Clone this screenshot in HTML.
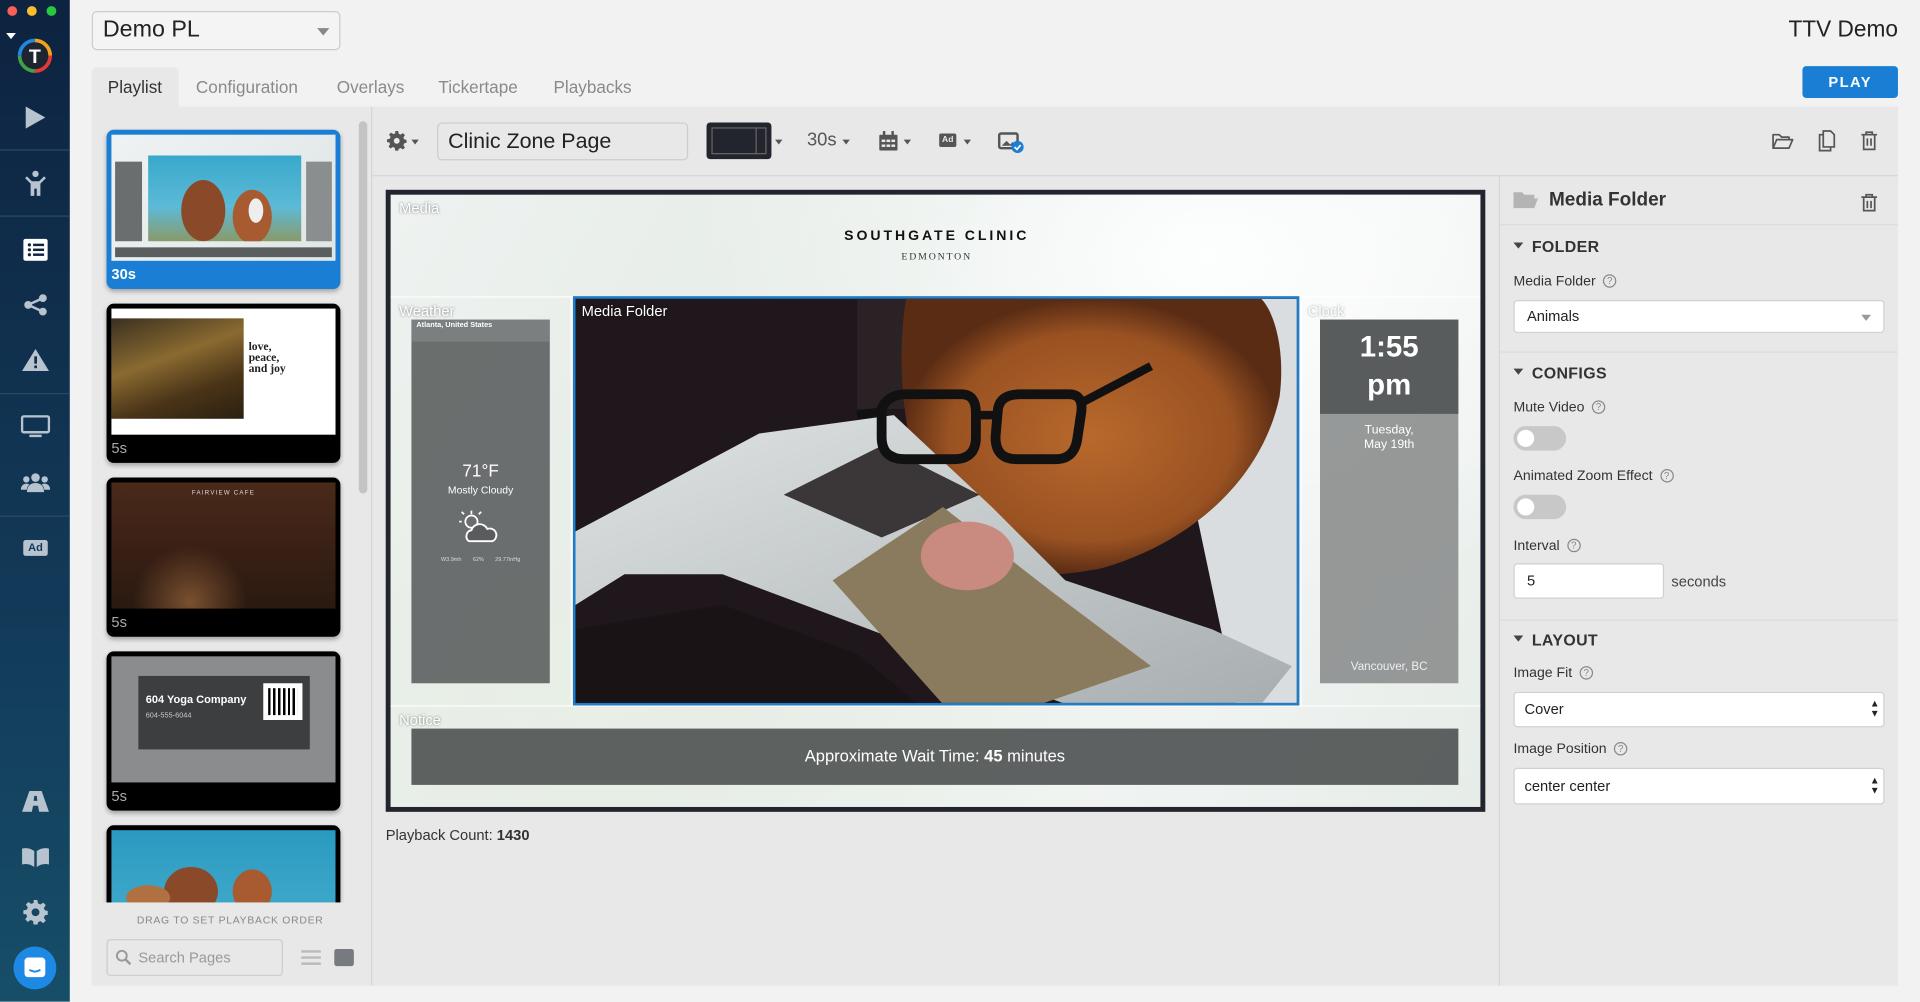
<!DOCTYPE html>
<html><head><meta charset="utf-8"><style>
*{box-sizing:border-box;margin:0;padding:0}
html,body{width:1920px;height:1001px;overflow:hidden;background:#f2f2f2;font-family:"Liberation Sans",sans-serif}
#w{position:absolute;left:0;top:0;width:1568px;height:818px;transform:scale(1.22449);transform-origin:0 0;background:#f2f2f2}
.a{position:absolute}
.sb{left:0;top:0;width:57px;height:818px;background:linear-gradient(#0d2340,#123a58 60%,#164e68)}
.sep{position:absolute;left:0;width:57px;height:1px;background:#2c4a66}
.tab{position:absolute;top:55px;height:32px;line-height:32px;font-size:14px;color:#8a8a8a}
.card{position:absolute;left:87px;width:191px;height:130px;background:#000;border-radius:6px;box-shadow:0 2px 4px rgba(0,0,0,.3);overflow:hidden}
.card .im{position:absolute;left:4px;top:4px;width:183px;height:103px;overflow:hidden}
.card .lb{position:absolute;left:4px;bottom:5px;font-size:12px;color:#aaa}
.lbl{font-size:11.5px;color:#333}
.q{display:inline-block;width:11px;height:11px;border:1px solid #888;border-radius:50%;font-size:8px;line-height:9px;text-align:center;color:#888;margin-left:6px;vertical-align:1px}
.hd{font-size:13px;font-weight:bold;color:#333;letter-spacing:.3px}
.hd:before{content:"";display:inline-block;border:4px solid transparent;border-top:5px solid #444;margin-right:7px;vertical-align:-1px}
.inp{position:absolute;background:#fff;border:1px solid #d0d0d0;border-radius:3px;font-size:12px;color:#222;padding-left:10px}
.tg{position:absolute;left:1236px;width:43px;height:20px;border-radius:10px;background:#c8c8c8}
.tg:after{content:"";position:absolute;left:3px;top:3px;width:14px;height:14px;border-radius:50%;background:#fff}
.zl{position:absolute;font-size:12px;color:#fff;text-shadow:0 0 2px rgba(0,0,0,.5)}
</style></head><body><div id="w">
<div class="a sb">
 <div class="a" style="left:6px;top:5px;width:8px;height:8px;border-radius:50%;background:#fc5f57"></div>
 <div class="a" style="left:22px;top:5px;width:8px;height:8px;border-radius:50%;background:#fdbc2e"></div>
 <div class="a" style="left:38px;top:5px;width:8px;height:8px;border-radius:50%;background:#28c840"></div>
 <div class="a" style="left:5px;top:27px;border:4px solid transparent;border-top:5px solid #fff"></div>
 <svg class="a" style="left:13px;top:30px" width="31" height="31" viewBox="0 0 31 31"><circle cx="15.5" cy="15.5" r="12.5" fill="#1d2530"/><path d="M15.5 3a12.5 12.5 0 0 1 12.5 12.5" stroke="#f4a11d" stroke-width="3" fill="none"/><path d="M28 15.5A12.5 12.5 0 0 1 15.5 28" stroke="#e53935" stroke-width="3" fill="none"/><path d="M15.5 28A12.5 12.5 0 0 1 3 15.5" stroke="#43a047" stroke-width="3" fill="none"/><path d="M3 15.5A12.5 12.5 0 0 1 15.5 3" stroke="#1e88e5" stroke-width="3" fill="none"/><text x="15.5" y="21.5" text-anchor="middle" font-size="16" font-weight="bold" fill="#fff" font-family="Liberation Sans">T</text></svg>
 <svg class="a" style="left:19px;top:86px" width="20" height="20"><path d="M2 1L18 10L2 19Z" fill="#b7c3cf"/></svg>
 <div class="sep" style="top:122px"></div>
 <svg class="a" style="left:20px;top:139px" width="18" height="22"><circle cx="9" cy="3" r="2.6" fill="#b7c3cf"/><path d="M2 5l4 4h6l4-4 1.5 1.5L13 11v10h-3v-6H8v6H5V11L.5 6.5z" fill="#b7c3cf"/></svg>
 <div class="sep" style="top:176px"></div>
 <svg class="a" style="left:19px;top:195px" width="20" height="18"><rect x="0" y="0" width="20" height="18" rx="2" fill="#fff"/><g fill="#0d2340"><circle cx="5" cy="5" r="1.3"/><circle cx="5" cy="9" r="1.3"/><circle cx="5" cy="13" r="1.3"/><rect x="8" y="4" width="9" height="2"/><rect x="8" y="8" width="9" height="2"/><rect x="8" y="12" width="9" height="2"/></g></svg>
 <svg class="a" style="left:19px;top:240px" width="20" height="18"><g fill="#b7c3cf"><circle cx="16" cy="3.5" r="3.2"/><circle cx="4" cy="9" r="3.2"/><circle cx="16" cy="14.5" r="3.2"/></g><path d="M16 3.5L4 9L16 14.5" stroke="#b7c3cf" stroke-width="2" fill="none"/></svg>
 <svg class="a" style="left:17px;top:284px" width="24" height="20"><path d="M12 1L23 19H1Z" fill="#b7c3cf"/><rect x="11" y="7" width="2.2" height="6" fill="#0f2c48"/><rect x="11" y="14.5" width="2.2" height="2.2" fill="#0f2c48"/></svg>
 <div class="sep" style="top:321px"></div>
 <svg class="a" style="left:17px;top:339px" width="24" height="19"><rect x="1" y="1" width="22" height="13" rx="1.5" stroke="#b7c3cf" stroke-width="2" fill="none"/><rect x="7" y="16" width="10" height="2" fill="#b7c3cf"/></svg>
 <svg class="a" style="left:17px;top:386px" width="24" height="16"><g fill="#b7c3cf"><circle cx="12" cy="4" r="3.5"/><circle cx="4.5" cy="5.5" r="2.6"/><circle cx="19.5" cy="5.5" r="2.6"/><path d="M5 16c0-5 3-7.5 7-7.5s7 2.5 7 7.5z"/><path d="M0 14c0-3 2-5 4.5-5 1 0 2 .3 2.5.8C5.5 11 5 12.5 4.8 14z"/><path d="M24 14c0-3-2-5-4.5-5-1 0-2 .3-2.5.8 1.5 1.2 2 2.7 2.2 4.2z"/></g></svg>
 <div class="sep" style="top:421px"></div>
 <div class="a" style="left:19px;top:441px;width:20px;height:13px;background:#b7c3cf;border-radius:2px;font-size:9px;font-weight:bold;color:#123a58;text-align:center;line-height:13px">Ad</div>
 <svg class="a" style="left:18px;top:646px" width="22" height="17"><path d="M6 0h10l6 17h-8l-1-5H9l-1 5H0zM10 4l-.5 4h3L12 4z" fill="#b7c3cf"/></svg>
 <svg class="a" style="left:18px;top:692px" width="22" height="16"><path d="M0 1c4-1 7 0 10 2v13c-3-2-6-3-10-2zM22 1c-4-1-7 0-10 2v13c3-2 6-3 10-2z" fill="#b7c3cf"/></svg>
 <svg class="a" style="left:19px;top:735px" width="20" height="20" viewBox="0 0 20 20"><path d="M8.5 0h3l.5 2.8 2 .9 2.3-1.6 2.1 2.1-1.6 2.3.9 2 2.8.5v3l-2.8.5-.9 2 1.6 2.3-2.1 2.1-2.3-1.6-2 .9-.5 2.8h-3L8 17.2 6 16.3 3.7 17.9 1.6 15.8 3.2 13.5 2.3 11.5 0 11.5v-3l2.8-.5.9-2L2.1 3.7 4.2 1.6 6.5 3.2l2-.9z" fill="#b7c3cf"/><circle cx="10" cy="10" r="3.2" fill="#144563"/></svg>
 <div class="a" style="left:11px;top:773px;width:35px;height:35px;border-radius:50%;background:#1e88e5"></div>
 <svg class="a" style="left:19px;top:781px" width="19" height="19"><rect x="1" y="1" width="17" height="16" rx="3" fill="#fff"/><path d="M5 11q4.5 3 9 0" stroke="#1e88e5" stroke-width="1.5" fill="none"/></svg>
</div>

<div class="a" style="left:75px;top:9px;width:203px;height:32px;border:1px solid #ccc;border-radius:4px;background:#f4f4f4;font-size:19px;line-height:30px;padding-left:8px;color:#222">Demo PL<div class="a" style="right:8px;top:13px;border:5px solid transparent;border-top:6px solid #888"></div></div>
<div class="a" style="right:18px;top:13px;font-size:18.5px;color:#222">TTV Demo</div>
<div class="a" style="left:75px;top:55px;width:71px;height:33px;background:#e8e8e8;border-radius:4px 4px 0 0"></div>
<div class="tab" style="left:88px;color:#333">Playlist</div>
<div class="tab" style="left:160px">Configuration</div>
<div class="tab" style="left:275px">Overlays</div>
<div class="tab" style="left:358px">Tickertape</div>
<div class="tab" style="left:452px">Playbacks</div>
<div class="a" style="left:1472px;top:54px;width:78px;height:26px;background:#1a7fd4;border-radius:3px;color:#fff;font-size:12px;font-weight:bold;letter-spacing:1.2px;text-align:center;line-height:26px">PLAY</div>

<div class="a" style="left:75px;top:87px;width:1475px;height:718px;background:#e8e8e8"></div>
<div class="a" style="left:303px;top:87px;width:1px;height:718px;background:#d6d6d6"></div>
<div class="a" style="left:293px;top:99px;width:7px;height:304px;background:#c4c4c4;border-radius:4px"></div>
<div class="card" style="top:106px;background:#1a7fd4">
 <div class="im" style="background:linear-gradient(135deg,#eef2f2,#dfe6e6)">
  <div class="a" style="left:30px;top:17px;width:125px;height:70px;background:linear-gradient(#39a8cc,#5cbad6 60%,#8a9a6a)"></div>
  <svg class="a" style="left:30px;top:17px" width="125" height="70"><ellipse cx="45" cy="45" rx="18" ry="25" fill="#8a4a2a"/><ellipse cx="85" cy="50" rx="16" ry="22" fill="#a85a30"/><ellipse cx="88" cy="45" rx="6" ry="10" fill="#eee"/></svg>
  <div class="a" style="left:3px;top:22px;width:22px;height:65px;background:#6a6e6e"></div>
  <div class="a" style="left:159px;top:22px;width:21px;height:65px;background:#8a8e8e"></div>
  <div class="a" style="left:3px;top:92px;width:177px;height:8px;background:#5a5e5e"></div>
 </div>
 <div class="lb" style="color:#fff;font-weight:bold">30s</div>
</div>
<div class="card" style="top:248px">
 <div class="im" style="background:#fff">
  <div class="a" style="left:0;top:8px;width:108px;height:82px;background:linear-gradient(160deg,#3a3020,#8a6a30 40%,#4a3418 70%,#2a2010)"></div>
  <div class="a" style="left:112px;top:28px;font-family:'Liberation Serif',serif;font-weight:bold;font-size:9.5px;line-height:9px;color:#222">love,<br>peace,<br>and joy</div>
 </div><div class="lb">5s</div>
</div>
<div class="card" style="top:390px">
 <div class="im" style="background:radial-gradient(circle at 35% 95%,#7a5030,transparent 30%),linear-gradient(#4a2a1a,#3a2015 50%,#2a1a10)"><div class="a" style="left:0;top:6px;width:183px;text-align:center;font-size:5px;color:#ddd;letter-spacing:1px">FAIRVIEW CAFE</div></div>
 <div class="lb">5s</div>
</div>
<div class="card" style="top:532px">
 <div class="im" style="background:#8a8c8e">
  <div class="a" style="left:22px;top:16px;width:140px;height:60px;background:#3c3e40"></div>
  <div class="a" style="left:28px;top:30px;font-size:9px;font-weight:bold;color:#fff">604 Yoga Company</div>
  <div class="a" style="left:28px;top:46px;font-size:6px;color:#ccc">604-555-6044</div>
  <div class="a" style="left:124px;top:22px;width:32px;height:30px;background:#fff"></div>
  <div class="a" style="left:128px;top:26px;width:24px;height:22px;background:repeating-linear-gradient(90deg,#000 0 2px,#fff 2px 4px)"></div>
 </div><div class="lb">5s</div>
</div>
<div class="card" style="top:674px;height:63px;border-radius:6px 6px 0 0">
 <div class="im" style="background:linear-gradient(#2a9ac0,#4ab0d0)"><svg width="183" height="60"><ellipse cx="65" cy="50" rx="22" ry="20" fill="#8a4a2a"/><ellipse cx="115" cy="50" rx="16" ry="18" fill="#a85a30"/><ellipse cx="30" cy="55" rx="18" ry="10" fill="#b07040"/></svg></div>
</div>
<div class="a" style="left:75px;top:737px;width:228px;height:68px;background:#e8e8e8"></div>
<div class="a" style="left:75px;top:746px;width:226px;text-align:center;font-size:8.5px;color:#888;letter-spacing:.6px">DRAG TO SET PLAYBACK ORDER</div>
<div class="a" style="left:87px;top:767px;width:144px;height:30px;border:1px solid #ccc;border-radius:3px;font-size:12px;color:#999;line-height:28px;padding-left:25px">Search Pages</div>
<svg class="a" style="left:94px;top:775px" width="14" height="14"><circle cx="5.5" cy="5.5" r="4" stroke="#999" stroke-width="1.6" fill="none"/><path d="M8.5 8.5L12.5 12.5" stroke="#999" stroke-width="2"/></svg>
<div class="a" style="left:246px;top:776px;width:16px;height:2px;background:#bbb;box-shadow:0 5px 0 #bbb,0 10px 0 #bbb"></div>
<div class="a" style="left:273px;top:775px;width:16px;height:14px;background:#777a80;border-radius:2px"></div>

<div class="a" style="left:304px;top:143px;width:1246px;height:1px;background:#d6d6d6"></div>
<svg class="a" style="left:316px;top:107px" width="16" height="16" viewBox="0 0 20 20"><path d="M8.5 0h3l.5 2.8 2 .9 2.3-1.6 2.1 2.1-1.6 2.3.9 2 2.8.5v3l-2.8.5-.9 2 1.6 2.3-2.1 2.1-2.3-1.6-2 .9-.5 2.8h-3L8 17.2 6 16.3 3.7 17.9 1.6 15.8 3.2 13.5 2.3 11.5 0 11.5v-3l2.8-.5.9-2L2.1 3.7 4.2 1.6 6.5 3.2l2-.9z" fill="#555"/><circle cx="10" cy="10" r="3" fill="#e8e8e8"/></svg>
<div class="a" style="left:336px;top:114px;border:3.5px solid transparent;border-top:4px solid #555"></div>
<div class="a" style="left:357px;top:100px;width:205px;height:31px;border:1px solid #ccc;border-radius:4px;font-size:17.5px;line-height:29px;padding-left:8px;color:#222">Clinic Zone Page</div>
<div class="a" style="left:577px;top:100px;width:53px;height:30px;background:#22252e;border-radius:3px"><div class="a" style="left:4px;top:4px;width:45px;height:22px;border:1px solid #666"></div><div class="a" style="left:40px;top:4px;width:1px;height:22px;background:#666"></div></div>
<div class="a" style="left:633px;top:114px;border:3.5px solid transparent;border-top:4px solid #555"></div>
<div class="a" style="left:659px;top:106px;font-size:15px;color:#555">30s</div>
<div class="a" style="left:688px;top:114px;border:3.5px solid transparent;border-top:4px solid #555"></div>
<svg class="a" style="left:718px;top:107px" width="15" height="16"><rect x="0" y="3" width="15" height="13" rx="1" fill="#555"/><rect x="3" y="0" width="2" height="4" fill="#555"/><rect x="10" y="0" width="2" height="4" fill="#555"/><g fill="#e8e8e8"><rect x="2" y="7" width="3" height="2"/><rect x="6" y="7" width="3" height="2"/><rect x="10" y="7" width="3" height="2"/><rect x="2" y="11" width="3" height="2"/><rect x="6" y="11" width="3" height="2"/><rect x="10" y="11" width="3" height="2"/></g></svg>
<div class="a" style="left:738px;top:114px;border:3.5px solid transparent;border-top:4px solid #555"></div>
<div class="a" style="left:767px;top:109px;width:14px;height:11px;background:#555;border-radius:1.5px;font-size:7px;font-weight:bold;color:#e8e8e8;text-align:center;line-height:11px">Ad</div>
<div class="a" style="left:787px;top:114px;border:3.5px solid transparent;border-top:4px solid #555"></div>
<svg class="a" style="left:815px;top:106px" width="22" height="20"><rect x="1" y="3" width="15" height="12" rx="1.5" stroke="#555" stroke-width="2" fill="none"/><path d="M3 13l4-4 3 3 2-2 3 3z" fill="#555"/><circle cx="16" cy="14" r="5" fill="#1a7fd4"/><path d="M13.5 14l2 2 3-3.5" stroke="#fff" stroke-width="1.4" fill="none"/></svg>
<svg class="a" style="left:1447px;top:108px" width="18" height="15"><path d="M1 2h5l2 2h6v2H4L1 13zM4 6h13l-3 7H1z" stroke="#555" stroke-width="1.4" fill="none" stroke-linejoin="round"/></svg>
<svg class="a" style="left:1485px;top:106px" width="14" height="18"><path d="M4 1h6l3 3v10H4z" stroke="#555" stroke-width="1.4" fill="none"/><path d="M4 4H1v13h9v-3" stroke="#555" stroke-width="1.4" fill="none"/></svg>
<svg class="a" style="left:1520px;top:107px" width="13" height="16"><path d="M0 3h13M4 3V1h5v2M2 3v12h9V3M5 6v6M8 6v6" stroke="#555" stroke-width="1.4" fill="none"/></svg>

<div class="a" style="left:315px;top:155px;width:898px;height:508px;background:#22252e"></div>
<div class="a" style="left:319px;top:159px;width:890px;height:500px;background:radial-gradient(ellipse at 75% 10%,#fdfefe,transparent 45%),radial-gradient(ellipse at 20% 80%,#e8efe6,transparent 50%),linear-gradient(120deg,#eef2f0,#e4ebe6 40%,#f2f5f4 70%,#e6ece8)"></div>
<div class="zl" style="left:326px;top:163px">Media</div>
<div class="a" style="left:600px;top:187px;width:330px;text-align:center;font-size:11.5px;font-weight:bold;letter-spacing:2.4px;color:#111">SOUTHGATE CLINIC</div>
<div class="a" style="left:600px;top:205px;width:330px;text-align:center;font-size:8px;letter-spacing:1.5px;color:#333;font-family:'Liberation Serif',serif">EDMONTON</div>
<div class="a" style="left:319px;top:242px;width:890px;height:1px;background:rgba(255,255,255,.9)"></div>
<div class="a" style="left:319px;top:576px;width:890px;height:1px;background:rgba(255,255,255,.9)"></div>
<div class="a" style="left:466px;top:242px;width:1px;height:334px;background:rgba(255,255,255,.9)"></div>
<div class="a" style="left:1062px;top:242px;width:1px;height:334px;background:rgba(255,255,255,.9)"></div>
<div class="zl" style="left:326px;top:247px">Weather</div>
<div class="a" style="left:336px;top:261px;width:113px;height:297px;background:rgba(88,92,92,.88)"></div>
<div class="a" style="left:336px;top:261px;width:113px;height:18px;background:rgba(140,144,144,.5)"></div>
<div class="a" style="left:340px;top:263px;font-size:6px;font-weight:bold;color:#fff">Atlanta, United States</div>
<div class="a" style="left:336px;top:376px;width:113px;text-align:center;font-size:14px;color:#fff">71°F</div>
<div class="a" style="left:336px;top:395px;width:113px;text-align:center;font-size:8.5px;color:#fff">Mostly Cloudy</div>
<svg class="a" style="left:373px;top:415px" width="40" height="30"><circle cx="12" cy="11" r="5" stroke="#fff" stroke-width="1.4" fill="none"/><path d="M12 2v3M4 11H2M6 5L4 3M18 5l2-2" stroke="#fff" stroke-width="1.4"/><path d="M10 27a5 5 0 0 1 2-9 7 7 0 0 1 13-1 5 5 0 0 1 4 10z" stroke="#fff" stroke-width="1.5" fill="rgba(88,92,92,1)"/></svg>
<div class="a" style="left:336px;top:454px;width:113px;text-align:center;font-size:4.5px;color:#ddd;word-spacing:8px">W3.9mh 62% 29.77inHg</div>
<div class="a" style="left:468px;top:242px;width:593px;height:334px;border:2px solid #1a7fd4;overflow:hidden;background:#1e1418">
 <svg width="590" height="331" viewBox="0 0 590 331">
  <defs><radialGradient id="dg" cx=".5" cy=".5" r=".5"><stop offset="0" stop-color="#b8692c"/><stop offset=".75" stop-color="#9a5222"/><stop offset="1" stop-color="#5a2c14"/></radialGradient>
  <linearGradient id="mg" x1="0" y1="0" x2="1" y2="1"><stop offset="0" stop-color="#dfe3e4"/><stop offset="1" stop-color="#a8aeb0"/></linearGradient></defs>
  <rect width="590" height="331" fill="#1f171b"/>
  <rect x="230" y="0" width="130" height="90" fill="#2b2226"/>
  <path d="M470 0H590V331H540z" fill="#d9dde0"/>
  <path d="M270 0C260 60 270 140 300 190 330 230 380 230 430 220 500 200 560 150 575 80 580 40 570 10 560 0z" fill="url(#dg)"/>
  <path d="M0 190L150 110 260 95 340 170 400 230 520 270 585 300 560 331H400L240 270 120 225 40 225 0 250z" fill="url(#mg)"/>
  <path d="M170 160L250 120 330 160 250 195z" fill="#3b3638"/>
  <path d="M210 230L300 170 390 240 470 300 380 331H300z" fill="#8a7a5e"/>
  <path d="M0 270L120 250 230 290 280 331H0z" fill="#1a1316"/>
  <ellipse cx="320" cy="210" rx="38" ry="28" fill="#c98a80"/>
  <path d="M250 90q5-12 20-12h45q12 0 12 15v20q0 18-18 18h-40q-19 0-19-18zM345 90q2-12 18-12h40q12 0 10 15l-3 20q-2 18-18 18h-32q-17 0-17-18z" stroke="#111" stroke-width="8" fill="none"/>
  <path d="M230 95L250 92M327 95h18M413 85L470 55" stroke="#111" stroke-width="7"/>
 </svg>
 <div class="zl" style="left:5px;top:3px">Media Folder</div>
</div>
<div class="zl" style="left:1068px;top:247px;opacity:.8">Clock</div>
<div class="a" style="left:1078px;top:261px;width:113px;height:297px;background:rgba(140,142,142,.9)"></div>
<div class="a" style="left:1078px;top:261px;width:113px;height:77px;background:rgba(85,88,88,.95)"></div>
<div class="a" style="left:1078px;top:268px;width:113px;text-align:center;font-size:24px;line-height:31px;font-weight:bold;color:#fff">1:55<br>pm</div>
<div class="a" style="left:1078px;top:346px;width:113px;text-align:center;font-size:10px;line-height:12px;color:#fff">Tuesday,<br>May 19th</div>
<div class="a" style="left:1078px;top:539px;width:113px;text-align:center;font-size:9.5px;color:#eee">Vancouver, BC</div>
<div class="zl" style="left:326px;top:581px">Notice</div>
<div class="a" style="left:336px;top:595px;width:855px;height:46px;background:rgba(85,88,88,.95);text-align:center;line-height:46px;font-size:13.5px;color:#fff">Approximate Wait Time: <b>45</b> minutes</div>
<div class="a" style="left:315px;top:675px;font-size:12px;color:#333">Playback Count: <b>1430</b></div>

<div class="a" style="left:1224px;top:144px;width:1px;height:661px;background:#d6d6d6"></div>
<svg class="a" style="left:1236px;top:156px" width="20" height="15"><path d="M0 1h7l2 2h8v3H4L0 14zM4 6h16l-3 8H0z" fill="#b4b4b4"/></svg>
<div class="a" style="left:1265px;top:155px;font-size:15.5px;font-weight:bold;color:#333">Media Folder</div>
<svg class="a" style="left:1520px;top:158px" width="13" height="15"><path d="M0 3h13M4 3V1h5v2M2 3v11h9V3M5 6v6M8 6v6" stroke="#555" stroke-width="1.4" fill="none"/></svg>
<div class="a" style="left:1225px;top:183px;width:325px;height:1px;background:#dcdcdc"></div>
<div class="a hd" style="left:1236px;top:194px">FOLDER</div>
<div class="a lbl" style="left:1236px;top:224px">Media Folder<span class="q">?</span></div>
<div class="inp" style="left:1236px;top:245px;width:303px;height:27px;line-height:25px">Animals<div class="a" style="right:10px;top:11px;border:4px solid transparent;border-top:5px solid #999"></div></div>
<div class="a" style="left:1225px;top:287px;width:325px;height:1px;background:#dcdcdc"></div>
<div class="a hd" style="left:1236px;top:297px">CONFIGS</div>
<div class="a lbl" style="left:1236px;top:327px">Mute Video<span class="q">?</span></div>
<div class="tg" style="top:348px"></div>
<div class="a lbl" style="left:1236px;top:383px">Animated Zoom Effect<span class="q">?</span></div>
<div class="tg" style="top:404px"></div>
<div class="a lbl" style="left:1236px;top:440px">Interval<span class="q">?</span></div>
<div class="inp" style="left:1236px;top:460px;width:123px;height:29px;line-height:27px">5</div>
<div class="a" style="left:1365px;top:468px;font-size:12px;color:#444">seconds</div>
<div class="a" style="left:1225px;top:506px;width:325px;height:1px;background:#dcdcdc"></div>
<div class="a hd" style="left:1236px;top:515px">LAYOUT</div>
<div class="a lbl" style="left:1236px;top:544px">Image Fit<span class="q">?</span></div>
<div class="inp" style="left:1236px;top:565px;width:303px;height:29px;line-height:27px;padding-left:8px">Cover<div class="a" style="right:3px;top:5px;font-size:8px;line-height:8px;color:#222">▲<br>▼</div></div>
<div class="a lbl" style="left:1236px;top:606px">Image Position<span class="q">?</span></div>
<div class="inp" style="left:1236px;top:627px;width:303px;height:30px;line-height:28px;padding-left:8px">center center<div class="a" style="right:3px;top:6px;font-size:8px;line-height:8px;color:#222">▲<br>▼</div></div>
</div></body></html>
